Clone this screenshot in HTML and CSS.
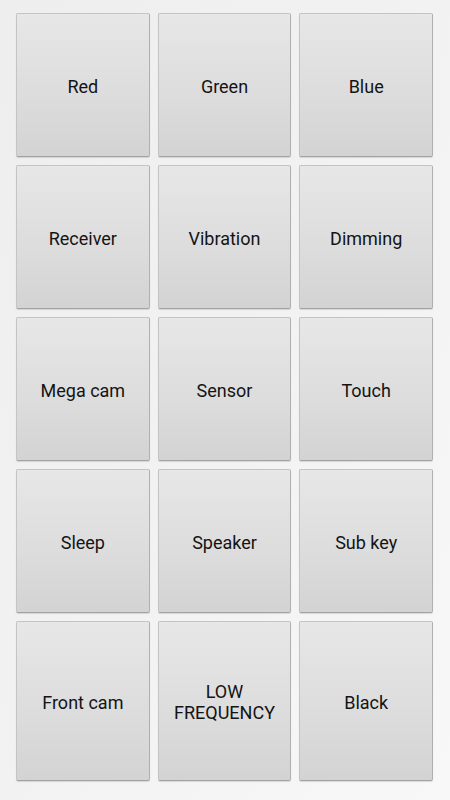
FILE: index.html
```html
<!DOCTYPE html>
<html>
<head>
<meta charset="utf-8">
<link rel="stylesheet" href="styles.css">
</head>
<body>
<div class="grid">
  <div class="btn">Red</div>
  <div class="btn">Green</div>
  <div class="btn">Blue</div>
  <div class="btn">Receiver</div>
  <div class="btn">Vibration</div>
  <div class="btn">Dimming</div>
  <div class="btn">Mega cam</div>
  <div class="btn">Sensor</div>
  <div class="btn">Touch</div>
  <div class="btn">Sleep</div>
  <div class="btn">Speaker</div>
  <div class="btn">Sub key</div>
  <div class="btn">Front cam</div>
  <div class="btn">LOW<br>FREQUENCY</div>
  <div class="btn">Black</div>
</div>
</body>
</html>
```
FILE: styles.css
```css
html, body {
  margin: 0;
  padding: 0;
}
body {
  width: 450px;
  height: 800px;
  background: linear-gradient(to bottom right, #eeeeee 0%, #f2f2f2 50%, #f8f8f8 100%);
  font-family: Roboto, "Liberation Sans", sans-serif;
}
.grid {
  box-sizing: border-box;
  height: 800px;
  padding: 13px 17px 19px 16px;
  display: grid;
  grid-template-columns: repeat(3, 1fr);
  grid-template-rows: repeat(4, 144px) 1fr;
  column-gap: 8px;
  row-gap: 8px;
}
.btn {
  box-sizing: border-box;
  display: flex;
  align-items: center;
  justify-content: center;
  text-align: center;
  font-size: 18px;
  line-height: 21px;
  padding-top: 2px;
  color: #141414;
  background: linear-gradient(to bottom, #e7e7e7 0%, #dcdcdc 60%, #d3d3d3 100%);
  border: 1px solid #c4c4c4;
  border-bottom-color: #a2a2a2;
  border-right-color: #b0b0b0;
  border-radius: 2px;
  box-shadow: 0 1px 1px rgba(0,0,0,0.12);
}
```
